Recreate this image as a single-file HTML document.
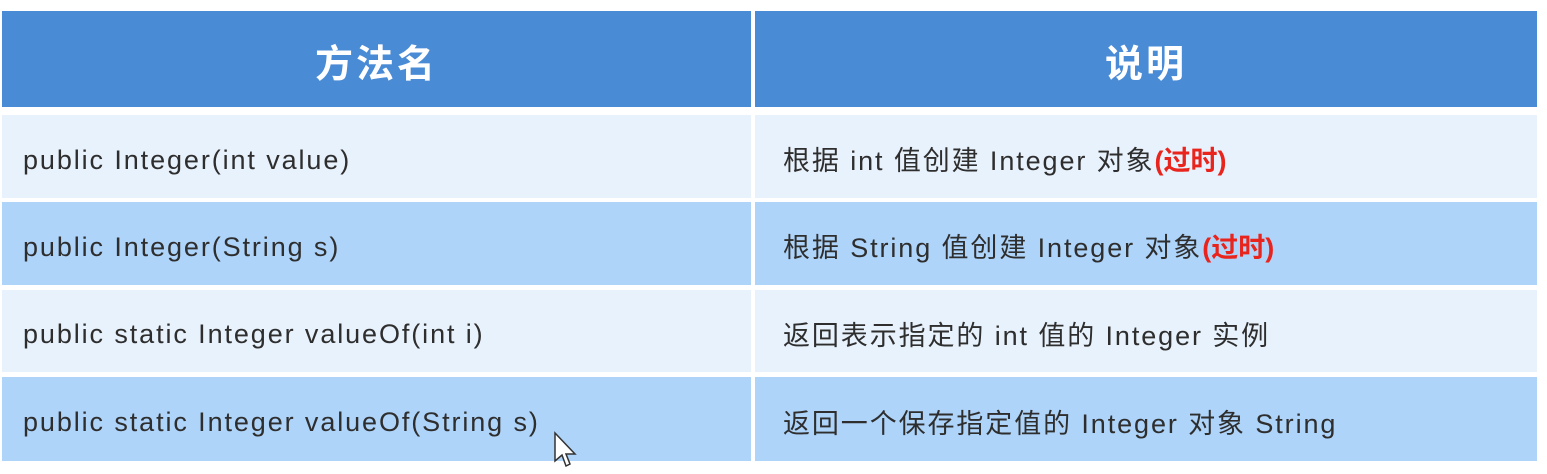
<!DOCTYPE html>
<html><head><meta charset="utf-8"><style>
html,body{margin:0;padding:0;background:#fff;width:1547px;height:474px;overflow:hidden}
body{position:relative;font-family:"Liberation Sans","Noto Sans CJK SC",sans-serif;color:#2e2e2e}
.c{position:absolute;box-sizing:border-box;display:flex;align-items:center}
.h{background:#4a8bd6;color:#fff;font-weight:bold;font-size:38px;letter-spacing:3px;justify-content:center;padding-top:2px}
.l{background:#e8f2fc}
.b{background:#aed4fa}
.t{font-size:27px;letter-spacing:1.9px;padding-left:21px;padding-top:7px}
.t2{font-size:27px;letter-spacing:1.9px;padding-left:28px;padding-top:4px}
.r{color:#e8241c;font-weight:bold;letter-spacing:0}
</style></head><body>
<div class="c h" style="left:2px;top:11px;width:749px;height:96px">方法名</div>
<div class="c h" style="left:755px;top:11px;width:782px;height:96px">说明</div>

<div class="c l t" style="left:2px;top:115px;width:749px;height:83px">public Integer(int value)</div>
<div class="c l t2" style="left:755px;top:115px;width:782px;height:83px">根据 int 值创建 Integer 对象<span class="r">(过时)</span></div>

<div class="c b t" style="left:2px;top:202px;width:749px;height:83px">public Integer(String s)</div>
<div class="c b t2" style="left:755px;top:202px;width:782px;height:83px">根据 String 值创建 Integer 对象<span class="r">(过时)</span></div>

<div class="c l t" style="left:2px;top:290px;width:749px;height:82px">public static Integer valueOf(int i)</div>
<div class="c l t2" style="left:755px;top:290px;width:782px;height:82px">返回表示指定的 int 值的 Integer 实例</div>

<div class="c b t" style="left:2px;top:377px;width:749px;height:84px">public static Integer valueOf(String s)</div>
<div class="c b t2" style="left:755px;top:377px;width:782px;height:84px">返回一个保存指定值的 Integer 对象 String</div>

<svg style="position:absolute;left:553px;top:431px" width="26" height="38" viewBox="0 0 26 38">
<path d="M2 2 L2 30 L9 24 L13 35 L17 33 L13 23 L22 23 Z" fill="#fff" stroke="#333" stroke-width="1.5"/>
</svg>
</body></html>
